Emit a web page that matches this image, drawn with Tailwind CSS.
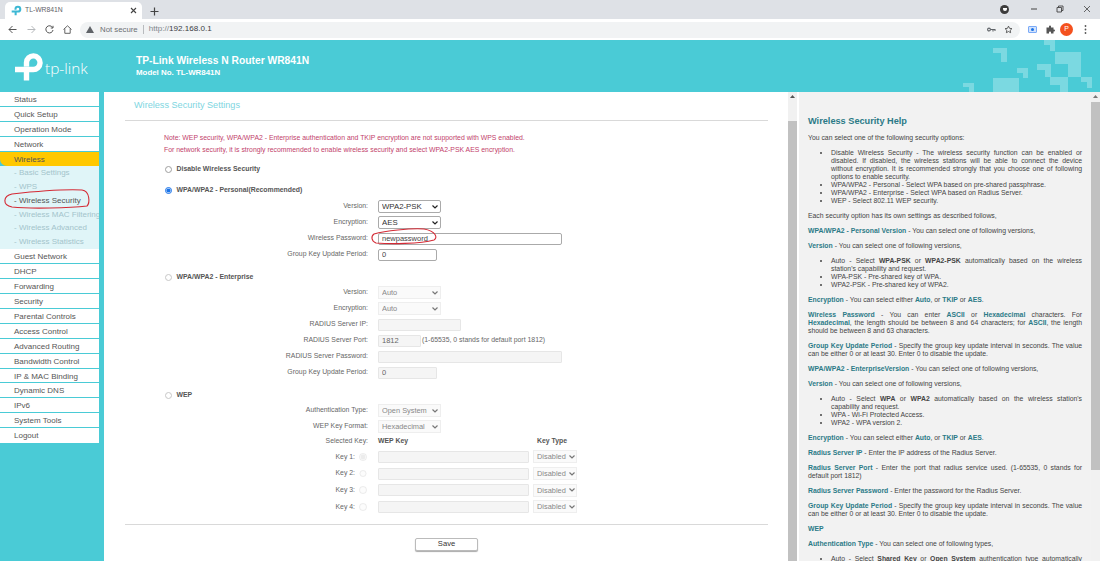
<!DOCTYPE html>
<html lang="en">
<head>
    <meta charset="UTF-8">
    <title>TL-WR841N</title>
    <script src="https://cdn.jsdelivr.net/npm/@tailwindcss/browser@4"></script>
</head>
<body class="bg-white overflow-hidden font-['Liberation_Sans',Arial,sans-serif]">
<div class="relative w-[1100px] h-[561px] flex flex-col overflow-hidden">

    <!-- browser tab strip -->
    <div class="h-[19px] bg-[#dee1e6] flex items-end pl-[5px] shrink-0">
        <div class="w-[137px] h-[17px] bg-white rounded-t-[5px] flex items-center pl-[6px] pr-[5px]">
            <svg width="11" height="11" viewBox="12 54 32 32" fill="none" stroke="#3db8d4" stroke-width="6"><path d="M25 68V66A7 7 0 1 1 32 73H14M25.5 73V84"/></svg>
            <span class="ml-[3px] text-[6.8px] text-[#5f6368]">TL-WR841N</span>
            <svg class="ml-auto" width="7" height="7" viewBox="0 0 7 7" stroke="#444" stroke-width="1.1"><path d="M1 1L6 6M6 1L1 6"/></svg>
        </div>
        <svg class="ml-[8px] mb-[3px]" width="9" height="9" viewBox="0 0 9 9" stroke="#444" stroke-width="1.2"><path d="M4.5 0.5V8.5M0.5 4.5H8.5"/></svg>
        <div class="ml-auto h-[19px] flex items-center text-[#555]">
            <div class="w-[9px] h-[9px] rounded-full bg-[#3c3c3c] flex items-center justify-center"><div class="w-[4px] h-[3px] rounded-b-[2px] bg-white"></div></div>
            <svg class="ml-[21px] mb-[2px]" width="8" height="8" viewBox="0 0 8 8" stroke="#444"><path d="M1 4H7"/></svg>
            <svg class="ml-[18px] mb-[2px]" width="8" height="8" viewBox="0 0 8 8" fill="none" stroke="#444" stroke-width="0.9"><path d="M1 2.5H5.5V7H1ZM2.5 2.5V1H7V5.5H5.5"/></svg>
            <svg class="ml-[19px] mr-[9px] mb-[2px]" width="8" height="8" viewBox="0 0 8 8" stroke="#444" stroke-width="0.8"><path d="M1 1L7 7M7 1L1 7"/></svg>
        </div>
    </div>

    <!-- browser toolbar -->
    <div class="h-[21px] bg-white flex items-center shrink-0 pl-[8px]">
        <svg width="9" height="9" viewBox="0 0 9 9" fill="none" stroke="#555" stroke-width="1"><path d="M8.5 4.5H1M4.5 1L1 4.5L4.5 8"/></svg>
        <svg class="ml-[10px]" width="9" height="9" viewBox="0 0 9 9" fill="none" stroke="#b5b8bb" stroke-width="1"><path d="M0.5 4.5H8M4.5 1L8 4.5L4.5 8"/></svg>
        <svg class="ml-[9px]" width="9" height="9" viewBox="0 0 9 9" fill="none" stroke="#555" stroke-width="1"><path d="M7.6 2.6A3.6 3.6 0 1 0 8 5M8 0.8V3H5.8"/></svg>
        <svg class="ml-[9px]" width="9" height="9" viewBox="0 0 9 9" fill="none" stroke="#555" stroke-width="0.9"><path d="M0.5 4.5L4.5 0.8L8.5 4.5M1.8 3.6V8.3H7.2V3.6"/></svg>
        <div class="ml-[8px] w-[940px] h-[16px] rounded-full bg-[#f1f3f4] flex items-center pl-[6px] pr-[7px]">
            <svg width="8" height="7" viewBox="0 0 8 7" fill="#5f6368"><path d="M4 0L8 7H0Z"/></svg>
            <span class="ml-[6px] text-[7.8px] text-[#6b6f73]">Not secure</span>
            <span class="ml-[5px] w-px h-[9px] bg-[#b8bbbe]"></span>
            <span class="ml-[5px] text-[8.1px] text-[#80868b]">http://<span class="text-[#3c4043]">192.168.0.1</span></span>
            <svg class="ml-auto" width="9" height="6" viewBox="0 0 9 6" fill="none" stroke="#5f6368" stroke-width="1.1"><circle cx="2" cy="2.5" r="1.4"/><path d="M3.5 2.5H8.5M6 2.5V4.5M8 2.5V4"/></svg>
            <svg class="ml-[8px]" width="9" height="9" viewBox="0 0 24 24" fill="none" stroke="#444" stroke-width="2.2"><path d="M12 3l2.8 5.9 6.4.8-4.7 4.4 1.2 6.4L12 17.4l-5.7 3.1 1.2-6.4-4.7-4.4 6.4-.8z"/></svg>
        </div>
        <div class="ml-[8px] w-[9px] h-[7px] rounded-[1px] bg-[#d2e3fc] border border-[#7baaf7] flex items-center justify-center"><div class="w-[3px] h-[3px] bg-[#1a73e8] rounded-full"></div></div>
        <svg class="ml-[9px]" width="9" height="9" viewBox="0 0 9 9" fill="#555"><path d="M0.5 2.5H3V1.5A1 1 0 0 1 5 1.5V2.5H7.5V4.5H8A1 1 0 0 1 8 6.5H7.5V8.5H5V7.5A1 1 0 0 0 3 7.5V8.5H0.5Z"/></svg>
        <div class="ml-[5px] w-[13px] h-[13px] rounded-full bg-[#f4511e] text-white text-[7px] flex items-center justify-center">P</div>
        <svg class="ml-[11px]" width="3" height="9" viewBox="0 0 3 9" fill="#555"><circle cx="1.5" cy="1" r="0.9"/><circle cx="1.5" cy="4.5" r="0.9"/><circle cx="1.5" cy="8" r="0.9"/></svg>
    </div>

    <!-- router header -->
    <div class="relative h-[52px] bg-[#4acbd6] flex items-center shrink-0 text-white">
        <svg class="absolute left-0 top-0" width="1100" height="52" viewBox="0 40 1100 52" fill="#fff" fill-opacity="0.27">
            <path d="M993 48H1007V62H1001V53H993Z"/>
            <path d="M1044 40H1055V51H1050V45H1044Z"/>
            <path d="M1055 52H1081V77H1068V64H1055Z"/>
            <path d="M1037 64H1051V77H1045V70H1037Z"/>
            <path d="M1017 68H1028V78H1023V73H1017Z"/>
            <path d="M993 78H1019V92H993Z"/>
            <path d="M1050 77H1068V92H1060V85H1050Z"/>
            <path d="M1081 77H1092V88H1087V82H1081Z"/>
            <path d="M963 83H974V92H969V87H963Z"/>
        </svg>
        <div class="relative w-[136px] h-full flex items-center pl-[14px]">
            <svg width="29" height="29" viewBox="13 55.5 29 29" fill="none" stroke="#fff" stroke-width="5.4"><path d="M25.5 70V66A6.8 6.8 0 1 1 32 73H14M25.5 73V84"/></svg>
            <span class="ml-[2px] mt-[5px] text-[15.4px] leading-none font-['Open_Sans',sans-serif] font-light">tp-link</span>
        </div>
        <div class="relative">
            <div class="text-[10.25px] leading-[13px] font-bold">TP-Link Wireless N Router WR841N</div>
            <div class="text-[7.9px] leading-[11px] font-bold">Model No. TL-WR841N</div>
        </div>
    </div>

    <div class="flex flex-1 min-h-0">
        <!-- left menu -->
        <div class="w-[104px] shrink-0 bg-[#4acbd6]">
            <div class="w-[99px] text-[8px] text-[#555] whitespace-nowrap overflow-hidden">
                <div class="h-[14.94px] pl-[14px] pt-[1px] bg-white border-b border-[#4acbd6] leading-[13px]">Status</div>
                <div class="h-[14.94px] pl-[14px] pt-[1px] bg-white border-b border-[#4acbd6] leading-[13px]">Quick Setup</div>
                <div class="h-[14.94px] pl-[14px] pt-[1px] bg-white border-b border-[#4acbd6] leading-[13px]">Operation Mode</div>
                <div class="h-[14.94px] pl-[14px] pt-[1px] bg-white border-b border-[#4acbd6] leading-[13px]">Network</div>
                <div class="h-[14.3px] pl-[14px] pt-[1px] bg-[#ffc800] rounded-bl-[7px] leading-[13px]">Wireless</div>
                <div class="bg-[#e0f5f8] text-[#a3c4cb] h-[83px]">
                    <div class="h-[13.83px] pl-[14px] leading-[13.83px]">- Basic Settings</div>
                    <div class="h-[13.83px] pl-[14px] leading-[13.83px]">- WPS</div>
                    <div class="h-[13.83px] pl-[14px] leading-[13.83px] text-[#555]">- Wireless Security</div>
                    <div class="h-[13.83px] pl-[14px] leading-[13.83px]">- Wireless MAC Filtering</div>
                    <div class="h-[13.83px] pl-[14px] leading-[13.83px]">- Wireless Advanced</div>
                    <div class="h-[13.83px] pl-[14px] leading-[13.83px]">- Wireless Statistics</div>
                </div>
                <div class="h-[14.94px] pl-[14px] pt-[1px] bg-white border-b border-[#4acbd6] leading-[13px]">Guest Network</div>
                <div class="h-[14.94px] pl-[14px] pt-[1px] bg-white border-b border-[#4acbd6] leading-[13px]">DHCP</div>
                <div class="h-[14.94px] pl-[14px] pt-[1px] bg-white border-b border-[#4acbd6] leading-[13px]">Forwarding</div>
                <div class="h-[14.94px] pl-[14px] pt-[1px] bg-white border-b border-[#4acbd6] leading-[13px]">Security</div>
                <div class="h-[14.94px] pl-[14px] pt-[1px] bg-white border-b border-[#4acbd6] leading-[13px]">Parental Controls</div>
                <div class="h-[14.94px] pl-[14px] pt-[1px] bg-white border-b border-[#4acbd6] leading-[13px]">Access Control</div>
                <div class="h-[14.94px] pl-[14px] pt-[1px] bg-white border-b border-[#4acbd6] leading-[13px]">Advanced Routing</div>
                <div class="h-[14.94px] pl-[14px] pt-[1px] bg-white border-b border-[#4acbd6] leading-[13px]">Bandwidth Control</div>
                <div class="h-[14.94px] pl-[14px] pt-[1px] bg-white border-b border-[#4acbd6] leading-[13px]">IP &amp; MAC Binding</div>
                <div class="h-[14.94px] pl-[14px] pt-[1px] bg-white border-b border-[#4acbd6] leading-[13px]">Dynamic DNS</div>
                <div class="h-[14.94px] pl-[14px] pt-[1px] bg-white border-b border-[#4acbd6] leading-[13px]">IPv6</div>
                <div class="h-[14.94px] pl-[14px] pt-[1px] bg-white border-b border-[#4acbd6] leading-[13px]">System Tools</div>
                <div class="h-[14.94px] pl-[14px] pt-[1px] bg-white leading-[13px]">Logout</div>
            </div>
        </div>

        <!-- settings form -->
        <div class="w-[684px] shrink-0 pl-[21px] pr-[20px] text-[6.88px] text-[#666]">
            <div class="h-[28.5px] pl-[9px] pt-[7px] text-[9.15px] leading-[12px] text-[#7ed6df] border-b border-[#d9d9d9]">Wireless Security Settings</div>

            <div class="pl-[39px]">
                <div class="mt-[11px] leading-[12px] text-[#c2416b] whitespace-nowrap">
                    <p>Note: WEP security, WPA/WPA2 - Enterprise authentication and TKIP encryption are not supported with WPS enabled.</p>
                    <p>For network security, it is strongly recommended to enable wireless security and select WPA2-PSK AES encryption.</p>
                </div>

                <label class="mt-[6px] h-[16px] flex items-center font-bold text-[#555]">
                    <input type="radio" name="sec" class="ml-[0.5px] w-[7.5px] h-[7.5px] m-0 opacity-70">
                    <span class="ml-[4.5px]">Disable Wireless Security</span>
                </label>
                <label class="mt-[5px] h-[16px] flex items-center font-bold text-[#555]">
                    <input type="radio" name="sec" checked class="ml-[0.5px] w-[7.5px] h-[7.5px] m-0 accent-[#1a73e8]">
                    <span class="ml-[4.5px]">WPA/WPA2 - Personal(Recommended)</span>
                </label>

                <div class="h-[16px] flex items-center">
                    <span class="w-[204px] text-right">Version:</span>
                    <div class="relative ml-[10px] w-[63px] h-[13px]">
                        <select class="appearance-none w-full h-full border border-[#aaa] rounded-[2px] bg-white pl-[3px] text-[7.8px] text-[#333]"><option>WPA2-PSK</option></select>
                        <svg class="absolute right-[3px] top-[4.5px]" width="6" height="4" viewBox="0 0 6 4" fill="none" stroke="#222" stroke-width="1.2"><path d="M0.5 0.5L3 3L5.5 0.5"/></svg>
                    </div>
                </div>
                <div class="h-[16px] flex items-center">
                    <span class="w-[204px] text-right">Encryption:</span>
                    <div class="relative ml-[10px] w-[63px] h-[13px]">
                        <select class="appearance-none w-full h-full border border-[#aaa] rounded-[2px] bg-white pl-[3px] text-[7.8px] text-[#333]"><option>AES</option></select>
                        <svg class="absolute right-[3px] top-[4.5px]" width="6" height="4" viewBox="0 0 6 4" fill="none" stroke="#222" stroke-width="1.2"><path d="M0.5 0.5L3 3L5.5 0.5"/></svg>
                    </div>
                </div>
                <div class="h-[16px] flex items-center">
                    <span class="w-[204px] text-right">Wireless Password:</span>
                    <input value="newpassword" class="ml-[10px] w-[184px] h-[12px] border border-[#aaa] rounded-[2px] pl-[3px] text-[7.5px] text-[#444]">
                </div>
                <div class="h-[16px] flex items-center">
                    <span class="w-[204px] text-right">Group Key Update Period:</span>
                    <input value="0" class="ml-[10px] w-[59px] h-[12px] border border-[#aaa] rounded-[2px] pl-[3px] text-[7.5px] text-[#444]">
                </div>

                <label class="mt-[8px] h-[14px] flex items-center font-bold text-[#555]">
                    <input type="radio" name="sec" class="ml-[0.5px] w-[7.5px] h-[7.5px] m-0 opacity-40">
                    <span class="ml-[4.5px]">WPA/WPA2 - Enterprise</span>
                </label>
                <div class="h-[16px] flex items-center">
                    <span class="w-[204px] text-right">Version:</span>
                    <div class="relative ml-[10px] w-[63px] h-[13px]">
                        <select disabled class="appearance-none w-full h-full border border-[#eee] bg-[#fafafa] pl-[3px] text-[7.4px] text-[#888]"><option>Auto</option></select>
                        <svg class="absolute right-[3px] top-[4.5px]" width="6" height="4" viewBox="0 0 6 4" fill="none" stroke="#777" stroke-width="1.2"><path d="M0.5 0.5L3 3L5.5 0.5"/></svg>
                    </div>
                </div>
                <div class="h-[16px] flex items-center">
                    <span class="w-[204px] text-right">Encryption:</span>
                    <div class="relative ml-[10px] w-[63px] h-[13px]">
                        <select disabled class="appearance-none w-full h-full border border-[#eee] bg-[#fafafa] pl-[3px] text-[7.4px] text-[#888]"><option>Auto</option></select>
                        <svg class="absolute right-[3px] top-[4.5px]" width="6" height="4" viewBox="0 0 6 4" fill="none" stroke="#777" stroke-width="1.2"><path d="M0.5 0.5L3 3L5.5 0.5"/></svg>
                    </div>
                </div>
                <div class="h-[16px] flex items-center">
                    <span class="w-[204px] text-right">RADIUS Server IP:</span>
                    <input disabled class="ml-[10px] w-[83px] h-[12px] border border-[#e6e6e6] rounded-[1px] bg-[#f5f5f5]">
                </div>
                <div class="h-[16px] flex items-center">
                    <span class="w-[204px] text-right">RADIUS Server Port:</span>
                    <input disabled value="1812" class="ml-[10px] w-[43px] h-[12px] border border-[#e6e6e6] rounded-[1px] bg-[#f5f5f5] pl-[3px] text-[7.5px] text-[#666]">
                    <span class="ml-[1px]">(1-65535, 0 stands for default port 1812)</span>
                </div>
                <div class="h-[16px] flex items-center">
                    <span class="w-[204px] text-right">RADIUS Server Password:</span>
                    <input disabled class="ml-[10px] w-[184px] h-[12px] border border-[#e6e6e6] rounded-[1px] bg-[#f5f5f5]">
                </div>
                <div class="h-[16px] flex items-center">
                    <span class="w-[204px] text-right">Group Key Update Period:</span>
                    <input disabled value="0" class="ml-[10px] w-[59px] h-[12px] border border-[#e6e6e6] rounded-[1px] bg-[#f5f5f5] pl-[3px] text-[7.5px] text-[#666]">
                </div>

                <label class="mt-[8px] h-[14px] flex items-center font-bold text-[#555]">
                    <input type="radio" name="sec" class="ml-[0.5px] w-[7.5px] h-[7.5px] m-0 opacity-40">
                    <span class="ml-[4.5px]">WEP</span>
                </label>
                <div class="h-[16px] flex items-center">
                    <span class="w-[204px] text-right">Authentication Type:</span>
                    <div class="relative ml-[10px] w-[63px] h-[13px]">
                        <select disabled class="appearance-none w-full h-full border border-[#eee] bg-[#fafafa] pl-[3px] text-[7.4px] text-[#888]"><option>Open System</option></select>
                        <svg class="absolute right-[3px] top-[4.5px]" width="6" height="4" viewBox="0 0 6 4" fill="none" stroke="#777" stroke-width="1.2"><path d="M0.5 0.5L3 3L5.5 0.5"/></svg>
                    </div>
                </div>
                <div class="h-[16px] flex items-center">
                    <span class="w-[204px] text-right">WEP Key Format:</span>
                    <div class="relative ml-[10px] w-[63px] h-[13px]">
                        <select disabled class="appearance-none w-full h-full border border-[#eee] bg-[#fafafa] pl-[3px] text-[7.4px] text-[#888]"><option>Hexadecimal</option></select>
                        <svg class="absolute right-[3px] top-[4.5px]" width="6" height="4" viewBox="0 0 6 4" fill="none" stroke="#777" stroke-width="1.2"><path d="M0.5 0.5L3 3L5.5 0.5"/></svg>
                    </div>
                </div>
                <div class="h-[14px] flex items-center">
                    <span class="w-[204px] text-right">Selected Key:</span>
                    <span class="ml-[10px] w-[159px] font-bold text-[#555]">WEP Key</span>
                    <span class="font-bold text-[#555]">Key Type</span>
                </div>

                <div class="h-[16.7px] flex items-center">
                    <span class="w-[191px] text-right">Key 1:</span>
                    <input type="radio" name="wep" checked disabled class="ml-[4px] w-[7.5px] h-[7.5px] m-0 opacity-40">
                    <input disabled class="ml-[11.5px] w-[151px] h-[12px] border border-[#e6e6e6] rounded-[1px] bg-[#f5f5f5]">
                    <div class="relative ml-[4px] w-[44px] h-[13px]">
                        <select disabled class="appearance-none w-full h-full border border-[#eee] bg-[#fafafa] pl-[3px] text-[7.4px] text-[#888]"><option>Disabled</option></select>
                        <svg class="absolute right-[2px] top-[4.5px]" width="6" height="4" viewBox="0 0 6 4" fill="none" stroke="#777" stroke-width="1.2"><path d="M0.5 0.5L3 3L5.5 0.5"/></svg>
                    </div>
                </div>
                <div class="h-[16.7px] flex items-center">
                    <span class="w-[191px] text-right">Key 2:</span>
                    <input type="radio" name="wep" disabled class="ml-[4px] w-[7.5px] h-[7.5px] m-0 opacity-40">
                    <input disabled class="ml-[11.5px] w-[151px] h-[12px] border border-[#e6e6e6] rounded-[1px] bg-[#f5f5f5]">
                    <div class="relative ml-[4px] w-[44px] h-[13px]">
                        <select disabled class="appearance-none w-full h-full border border-[#eee] bg-[#fafafa] pl-[3px] text-[7.4px] text-[#888]"><option>Disabled</option></select>
                        <svg class="absolute right-[2px] top-[4.5px]" width="6" height="4" viewBox="0 0 6 4" fill="none" stroke="#777" stroke-width="1.2"><path d="M0.5 0.5L3 3L5.5 0.5"/></svg>
                    </div>
                </div>
                <div class="h-[16.7px] flex items-center">
                    <span class="w-[191px] text-right">Key 3:</span>
                    <input type="radio" name="wep" disabled class="ml-[4px] w-[7.5px] h-[7.5px] m-0 opacity-40">
                    <input disabled class="ml-[11.5px] w-[151px] h-[12px] border border-[#e6e6e6] rounded-[1px] bg-[#f5f5f5]">
                    <div class="relative ml-[4px] w-[44px] h-[13px]">
                        <select disabled class="appearance-none w-full h-full border border-[#eee] bg-[#fafafa] pl-[3px] text-[7.4px] text-[#888]"><option>Disabled</option></select>
                        <svg class="absolute right-[2px] top-[4.5px]" width="6" height="4" viewBox="0 0 6 4" fill="none" stroke="#777" stroke-width="1.2"><path d="M0.5 0.5L3 3L5.5 0.5"/></svg>
                    </div>
                </div>
                <div class="h-[16.7px] flex items-center">
                    <span class="w-[191px] text-right">Key 4:</span>
                    <input type="radio" name="wep" disabled class="ml-[4px] w-[7.5px] h-[7.5px] m-0 opacity-40">
                    <input disabled class="ml-[11.5px] w-[151px] h-[12px] border border-[#e6e6e6] rounded-[1px] bg-[#f5f5f5]">
                    <div class="relative ml-[4px] w-[44px] h-[13px]">
                        <select disabled class="appearance-none w-full h-full border border-[#eee] bg-[#fafafa] pl-[3px] text-[7.4px] text-[#888]"><option>Disabled</option></select>
                        <svg class="absolute right-[2px] top-[4.5px]" width="6" height="4" viewBox="0 0 6 4" fill="none" stroke="#777" stroke-width="1.2"><path d="M0.5 0.5L3 3L5.5 0.5"/></svg>
                    </div>
                </div>
            </div>

            <div class="mt-[8.5px] border-t border-[#d9d9d9]"></div>
            <div class="mt-[13px] flex justify-center">
                <button class="w-[63px] h-[13px] border border-[#bbb] rounded-[2px] bg-white shadow-[0_1px_1px_#aaa] text-[7.6px] leading-none text-[#333]">Save</button>
            </div>
        </div>

        <!-- form scrollbar -->
        <div class="w-[9px] shrink-0 bg-[#f1f1f1] flex flex-col">
            <svg class="ml-[2px] mt-[3px] mb-[23px] shrink-0" width="5" height="3" viewBox="0 0 5 3" fill="#555"><path d="M2.5 0L5 3H0Z"/></svg>
            <div class="flex-1 bg-[#c1c1c1]"></div>
        </div>
        <div class="w-[2px] shrink-0 bg-white"></div>

        <!-- help panel -->
        <div class="w-[292px] shrink-0 bg-[#f2f2f2] overflow-hidden pl-[9px] pr-[9px] pt-[23px] text-[6.85px] leading-[8px] text-[#444] text-justify">
            <h2 class="text-[9.2px] leading-[12px] font-bold text-[#2b7a87]">Wireless Security Help</h2>
            <p class="mt-[7px]">You can select one of the following security options:</p>
            <ul class="mt-[7px] pl-[23px] list-disc">
                <li>Disable Wireless Security - The wireless security function can be enabled or disabled. If disabled, the wireless stations will be able to connect the device without encryption. It is recommended strongly that you choose one of following options to enable security.</li>
                <li>WPA/WPA2 - Personal - Select WPA based on pre-shared passphrase.</li>
                <li>WPA/WPA2 - Enterprise - Select WPA based on Radius Server.</li>
                <li>WEP - Select 802.11 WEP security.</li>
            </ul>
            <p class="mt-[7px]">Each security option has its own settings as described follows,</p>
            <p class="mt-[7px]"><b class="text-[#2b7a87]">WPA/WPA2 - Personal Version</b> - You can select one of following versions,</p>
            <p class="mt-[7px]"><b class="text-[#2b7a87]">Version</b> - You can select one of following versions,</p>
            <ul class="mt-[7px] pl-[23px] list-disc">
                <li>Auto - Select <b>WPA-PSK</b> or <b>WPA2-PSK</b> automatically based on the wireless station's capability and request.</li>
                <li>WPA-PSK - Pre-shared key of WPA.</li>
                <li>WPA2-PSK - Pre-shared key of WPA2.</li>
            </ul>
            <p class="mt-[7px]"><b class="text-[#2b7a87]">Encryption</b> - You can select either <b class="text-[#2b7a87]">Auto</b>, or <b class="text-[#2b7a87]">TKIP</b> or <b class="text-[#2b7a87]">AES</b>.</p>
            <p class="mt-[7px]"><b class="text-[#2b7a87]">Wireless Password</b> - You can enter <b class="text-[#2b7a87]">ASCII</b> or <b class="text-[#2b7a87]">Hexadecimal</b> characters. For <b class="text-[#2b7a87]">Hexadecimal</b>, the length should be between 8 and 64 characters; for <b class="text-[#2b7a87]">ASCII</b>, the length should be between 8 and 63 characters.</p>
            <p class="mt-[7px]"><b class="text-[#2b7a87]">Group Key Update Period</b> - Specify the group key update interval in seconds. The value can be either 0 or at least 30. Enter 0 to disable the update.</p>
            <p class="mt-[7px]"><b class="text-[#2b7a87]">WPA/WPA2 - EnterpriseVersion</b> - You can select one of following versions,</p>
            <p class="mt-[7px]"><b class="text-[#2b7a87]">Version</b> - You can select one of following versions,</p>
            <ul class="mt-[7px] pl-[23px] list-disc">
                <li>Auto - Select <b>WPA</b> or <b>WPA2</b> automatically based on the wireless station's capability and request.</li>
                <li>WPA - Wi-Fi Protected Access.</li>
                <li>WPA2 - WPA version 2.</li>
            </ul>
            <p class="mt-[7px]"><b class="text-[#2b7a87]">Encryption</b> - You can select either <b class="text-[#2b7a87]">Auto</b>, or <b class="text-[#2b7a87]">TKIP</b> or <b class="text-[#2b7a87]">AES</b>.</p>
            <p class="mt-[7px]"><b class="text-[#2b7a87]">Radius Server IP</b> - Enter the IP address of the Radius Server.</p>
            <p class="mt-[7px]"><b class="text-[#2b7a87]">Radius Server Port</b> - Enter the port that radius service used. (1-65535, 0 stands for default port 1812)</p>
            <p class="mt-[7px]"><b class="text-[#2b7a87]">Radius Server Password</b> - Enter the password for the Radius Server.</p>
            <p class="mt-[7px]"><b class="text-[#2b7a87]">Group Key Update Period</b> - Specify the group key update interval in seconds. The value can be either 0 or at least 30. Enter 0 to disable the update.</p>
            <p class="mt-[7px]"><b class="text-[#2b7a87]">WEP</b></p>
            <p class="mt-[7px]"><b class="text-[#2b7a87]">Authentication Type</b> - You can select one of following types,</p>
            <ul class="mt-[7px] pl-[23px] list-disc">
                <li>Auto - Select <b>Shared Key</b> or <b>Open System</b> authentication type automatically based on the wireless station's capability and request.</li>
            </ul>
        </div>

        <!-- help scrollbar -->
        <div class="w-[9px] shrink-0 bg-[#f1f1f1] flex flex-col">
            <svg class="ml-[2px] mt-[3px] mb-[4px] shrink-0" width="5" height="3" viewBox="0 0 5 3" fill="#777"><path d="M2.5 0L5 3H0Z"/></svg>
            <div class="h-[368px] bg-[#c1c1c1]"></div>
        </div>
    </div>

    <!-- red pen marks drawn on the screenshot -->
    <svg class="absolute left-0 top-0 pointer-events-none" width="1100" height="561" fill="none" stroke="#d42a35" stroke-width="1.1">
        <path d="M12 194C30 192 60 189 82 190C90 191 90 203 87 206C70 208 30 209 12 207C2 205 3 196 12 194Z"/>
        <path d="M374 234C385 231 410 228 424 229C436 231 438 238 434 240C420 244 390 244 376 243C371 241 371 236 374 234Z"/>
    </svg>
</div>
</body>
</html>
